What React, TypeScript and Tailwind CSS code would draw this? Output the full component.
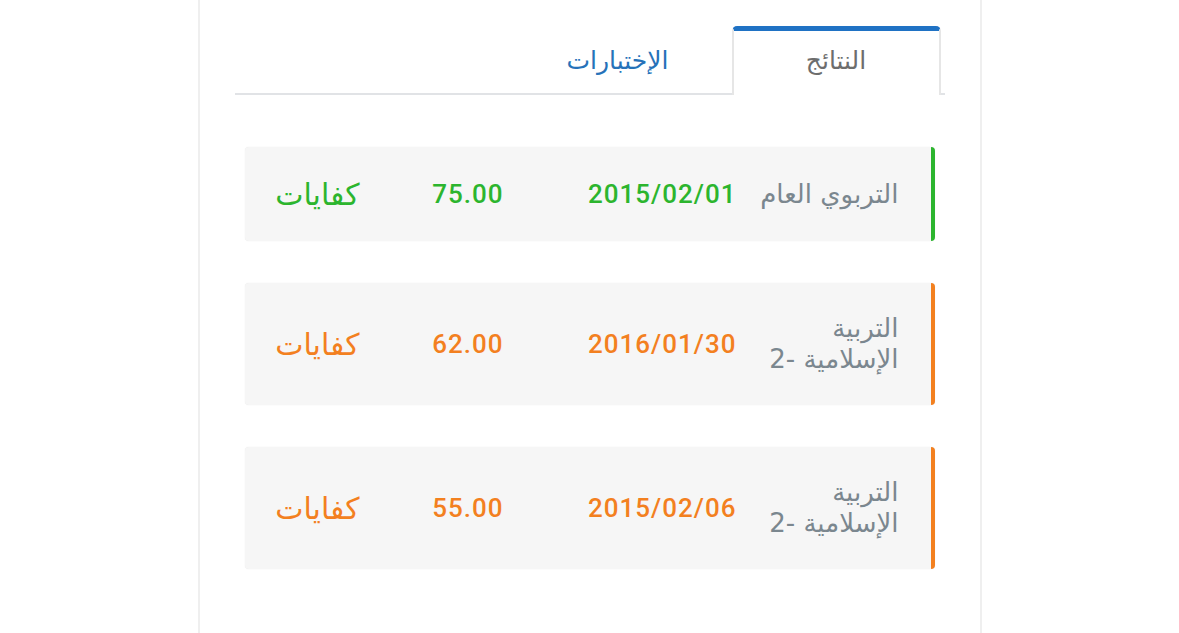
const rows = [
  { subject: ["التربوي العام"], date: "2015/02/01", score: "75.00", tone: "green" },
  { subject: ["التربية", "الإسلامية -2"], date: "2016/01/30", score: "62.00", tone: "orange" },
  { subject: ["التربية", "الإسلامية -2"], date: "2015/02/06", score: "55.00", tone: "orange" },
];

const arabic = "font-['DejaVu_Sans','Noto_Sans',sans-serif]";

function ResultRow({ subject, date, score, tone }: (typeof rows)[number]) {
  const green = tone === "green";
  return (
    <div
      className={
        "flex min-h-[94px] items-center rounded-[4px] border-r-4 bg-[#f6f6f6] py-[30px] pr-[32px] shadow-[0_0_1px_rgba(0,0,0,0.12)] " +
        (green ? "border-r-[#2cb52e] text-[#2cb52e]" : "border-r-[#f3801f] text-[#f3801f]")
      }
    >
      <div className={arabic + " w-[150px] text-[26px] leading-[31px] text-[#7b878f]"}>
        {subject.map((s, i) => (
          <div key={i} className="whitespace-nowrap">
            {s}
          </div>
        ))}
      </div>
      <div className="mr-[12px] w-[233px] text-right text-[26px] font-medium leading-[31px] tracking-[1px]" dir="ltr">
        {date}
      </div>
      <div className="w-[144px] text-right text-[26px] font-medium leading-[31px] tracking-[1px]" dir="ltr">
        {score}
      </div>
      <div className={arabic + " text-[30px] leading-[31px]"}>كفايات</div>
    </div>
  );
}

export default function App() {
  return (
    <div className="min-h-[633px] bg-white font-['Roboto',sans-serif]" dir="rtl">
      <div className="mx-auto min-h-[633px] w-[784px] border-x-[2px] border-[#efefef] px-[35px] pt-[26px]">
        {/* tabs */}
        <div className="flex border-b-2 border-[#e1e3e6] pr-[4px]">
          <div className={arabic + " -mb-[2px] flex h-[69px] w-[209px] items-center justify-center rounded-t-[5px] border-x-2 border-t-[5px] border-x-[#e6e6e6] border-t-[#1f72c4] bg-white pb-[4px] text-[25px] tracking-[1px] text-[#6d6d6d]"}>
            النتائج
          </div>
          <div className={arabic + " flex h-[67px] w-[228px] items-center justify-center pt-[2px] text-[25px] text-[#2672b9]"}>
            الإختبارات
          </div>
        </div>

        <div className="mx-[10px] mt-[52px] flex flex-col gap-[42px]">
          {rows.map((r, i) => (
            <ResultRow key={i} {...r} />
          ))}
        </div>
      </div>
    </div>
  );
}
